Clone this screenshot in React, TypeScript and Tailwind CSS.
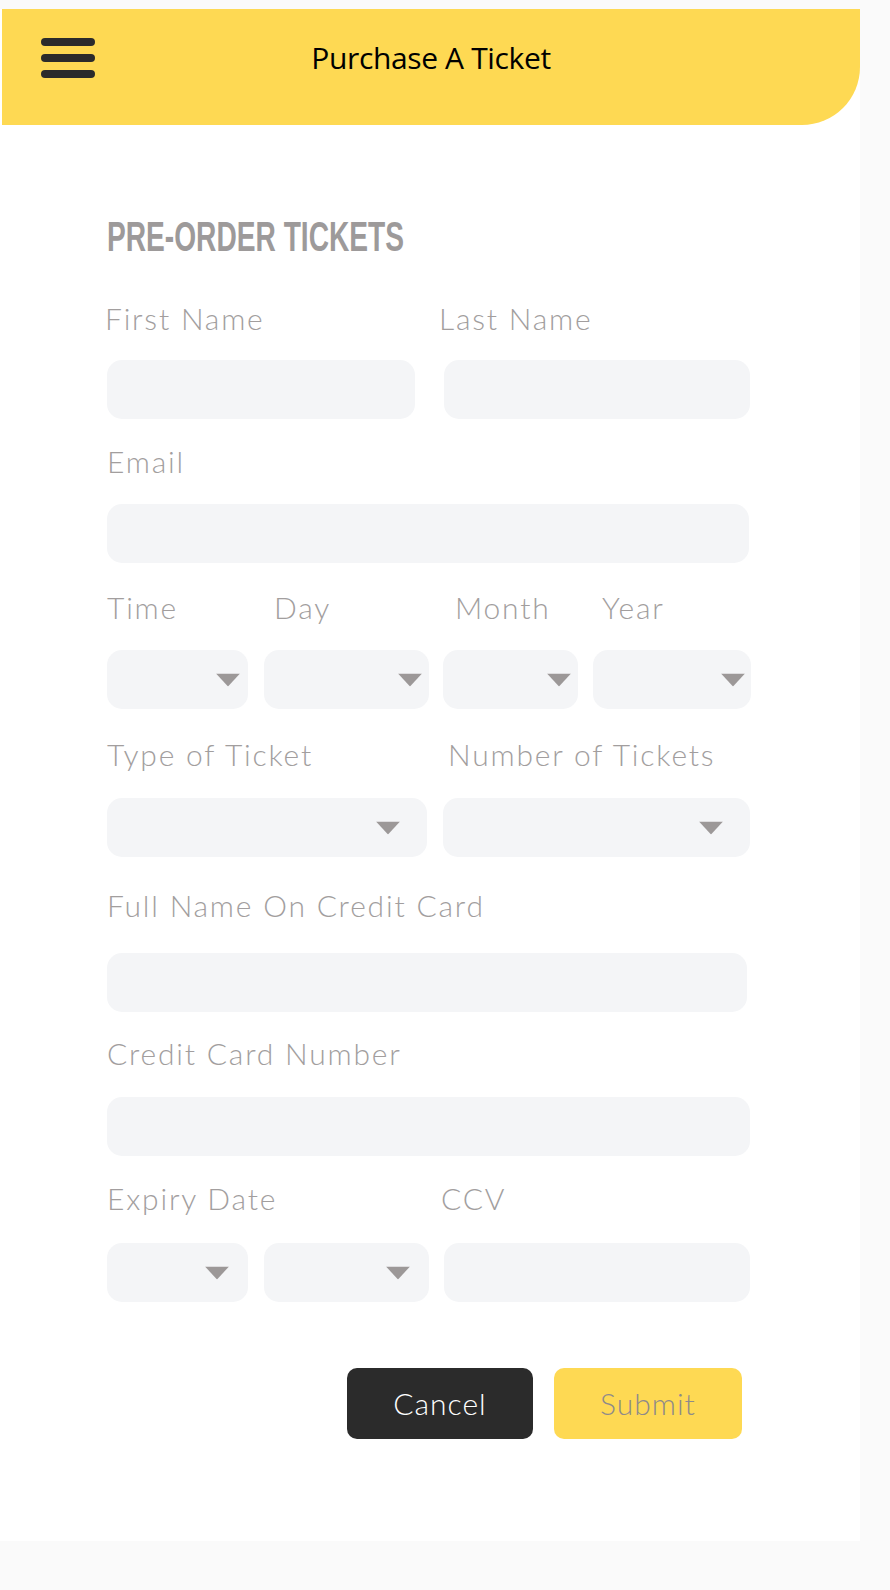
import React from "react";

const LABEL =
  "h-[30px] whitespace-nowrap font-['Lato',sans-serif] text-[30px] font-light leading-[30px] tracking-[1.8px] text-[#a29e9e]";

function Arrow({ className }: { className: string }) {
  return (
    <svg
      className={`absolute top-1/2 -translate-y-1/2 ${className}`}
      width="24"
      height="13"
      viewBox="0 0 24 13"
    >
      <polygon points="0,0 24,0 12,13" fill="#9c9898" />
    </svg>
  );
}

function Box({ w, arrow }: { w: string; arrow?: string }) {
  return (
    <div className={`relative h-[59px] rounded-[15px] bg-[#f4f5f7] ${w}`}>
      {arrow && <Arrow className={arrow} />}
    </div>
  );
}

export default function App() {
  return (
    <div className="min-h-[1590px] bg-[#fafafa] pt-[9px]">
      <div className="h-[1532px] w-[860px] bg-white">
        {/* Top bar */}
        <header className="ml-[2px] h-[116px] w-[858px] rounded-br-[58px] bg-[#fed953]">
          <div className="grid h-[98px] grid-cols-[1fr_auto_1fr] items-center">
            <div className="flex flex-col gap-[8px] pl-[39px]">
              <span className="h-[8px] w-[54px] rounded-full bg-[#2b2b2b]" />
              <span className="h-[8px] w-[54px] rounded-full bg-[#2b2b2b]" />
              <span className="h-[8px] w-[54px] rounded-full bg-[#2b2b2b]" />
            </div>
            <h1 className="font-['Open_Sans',sans-serif] text-[30px] leading-none tracking-[-0.012em] text-black">
              Purchase A Ticket
            </h1>
            <div />
          </div>
        </header>

        <form className="pl-[107px]">
          <h2 className="mt-[91px] origin-left scale-x-[0.67] whitespace-nowrap font-['Liberation_Sans',sans-serif] text-[42px] font-bold leading-[42px] text-[#9d9a9a]">
            PRE-ORDER TICKETS
          </h2>

          {/* names */}
          <div className="mt-[45px] flex gap-[29px]">
            <div className="w-[308px]">
              <div className={`${LABEL} -ml-[2px]`}>First Name</div>
              <div className="mt-[27px]">
                <Box w="w-[308px]" />
              </div>
            </div>
            <div className="w-[306px]">
              <div className={`${LABEL} -ml-[5px]`}>Last Name</div>
              <div className="mt-[27px]">
                <Box w="w-[306px]" />
              </div>
            </div>
          </div>

          {/* email */}
          <div className={`${LABEL} mt-[27px]`}>Email</div>
          <div className="mt-[28px]">
            <Box w="w-[642px]" />
          </div>

          {/* date */}
          <div className="mt-[29px] flex">
            <div className="w-[141px]">
              <div className={LABEL}>Time</div>
              <div className="mt-[28px]">
                <Box w="w-[141px]" arrow="right-[8px]" />
              </div>
            </div>
            <div className="ml-[16px] w-[165px]">
              <div className={`${LABEL} ml-[10px]`}>Day</div>
              <div className="mt-[28px]">
                <Box w="w-[165px]" arrow="right-[7px]" />
              </div>
            </div>
            <div className="ml-[14px] w-[135px]">
              <div className={`${LABEL} ml-[12px]`}>Month</div>
              <div className="mt-[28px]">
                <Box w="w-[135px]" arrow="right-[7px]" />
              </div>
            </div>
            <div className="ml-[15px] w-[158px]">
              <div className={`${LABEL} ml-[9px]`}>Year</div>
              <div className="mt-[28px]">
                <Box w="w-[158px]" arrow="right-[6px]" />
              </div>
            </div>
          </div>

          {/* ticket */}
          <div className="mt-[30px] flex gap-[16px]">
            <div className="w-[320px]">
              <div className={LABEL}>Type of Ticket</div>
              <div className="mt-[29px]">
                <Box w="w-[320px]" arrow="right-[27px]" />
              </div>
            </div>
            <div className="w-[307px]">
              <div className={`${LABEL} ml-[5px]`}>Number of Tickets</div>
              <div className="mt-[29px]">
                <Box w="w-[307px]" arrow="right-[27px]" />
              </div>
            </div>
          </div>

          {/* card */}
          <div className={`${LABEL} mt-[33px]`}>Full Name On Credit Card</div>
          <div className="mt-[33px]">
            <Box w="w-[640px]" />
          </div>

          <div className={`${LABEL} mt-[26px]`}>Credit Card Number</div>
          <div className="mt-[29px]">
            <Box w="w-[643px]" />
          </div>

          <div className="mt-[27px] flex">
            <div className="w-[141px]">
              <div className={LABEL}>Expiry Date</div>
              <div className="mt-[30px]">
                <Box w="w-[141px]" arrow="right-[19px]" />
              </div>
            </div>
            <div className="ml-[16px] w-[165px]">
              <div className={LABEL}>&nbsp;</div>
              <div className="mt-[30px]">
                <Box w="w-[165px]" arrow="right-[19px]" />
              </div>
            </div>
            <div className="ml-[15px] w-[306px]">
              <div className={`${LABEL} -ml-[3px]`}>CCV</div>
              <div className="mt-[30px]">
                <Box w="w-[306px]" />
              </div>
            </div>
          </div>

          {/* actions */}
          <div className="ml-[240px] mt-[66px] flex gap-[21px]">
            <button
              type="button"
              className="h-[71px] w-[186px] rounded-[10px] bg-[#2b2b2b] font-['Lato',sans-serif] text-[30px] font-light tracking-[1px] text-white"
            >
              Cancel
            </button>
            <button
              type="button"
              className="h-[71px] w-[188px] rounded-[10px] bg-[#fed953] font-['Lato',sans-serif] text-[30px] font-light tracking-[1px] text-[#8e8a8a]"
            >
              Submit
            </button>
          </div>
        </form>
      </div>
    </div>
  );
}
